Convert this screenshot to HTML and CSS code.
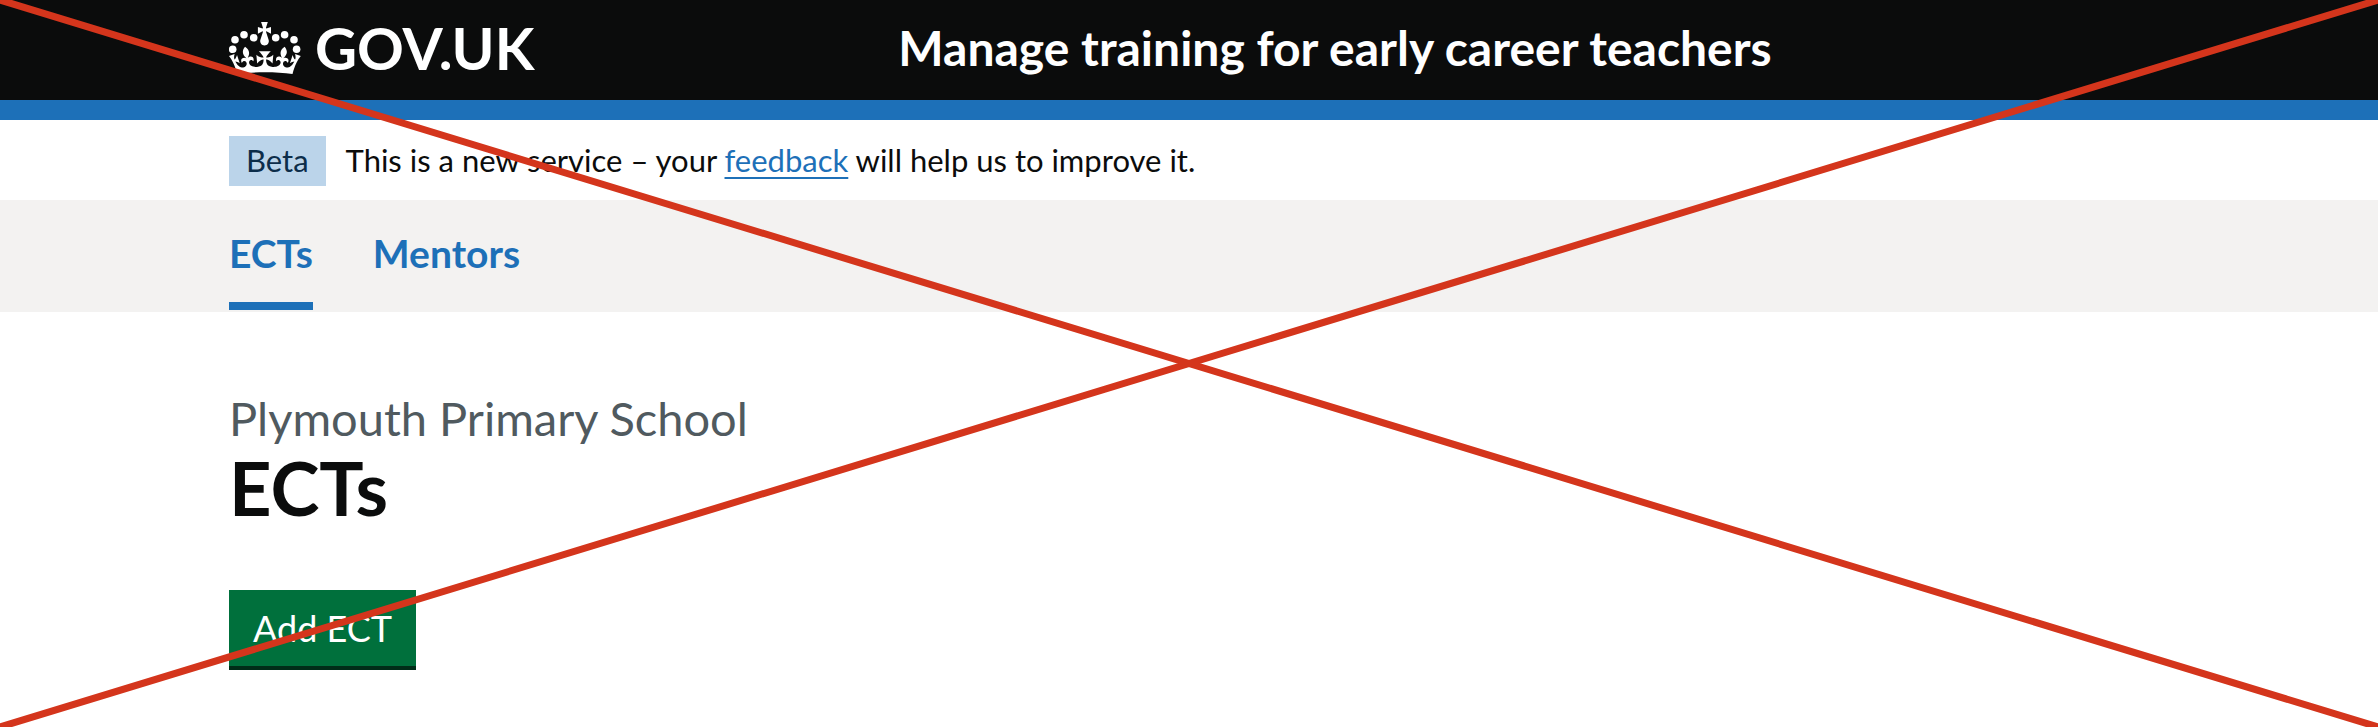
FILE: index.html
```html
<!DOCTYPE html>
<html lang="en">
<head>
<meta charset="utf-8">
<meta name="viewport" content="width=device-width, initial-scale=1">
<title>ECTs - Manage training for early career teachers</title>
<link rel="stylesheet" href="styles.css">
</head>
<body>
<header class="header">
  <div class="container header-inner">
    <a class="logo" href="#" aria-label="GOV.UK">
      <svg class="crown" viewBox="0 0 72 53" aria-hidden="true">
        <g fill="currentColor">
          <circle cx="3.7" cy="27.3" r="3.8"/>
          <circle cx="6" cy="17.7" r="3.8"/>
          <circle cx="15" cy="12.8" r="3.8"/>
          <circle cx="24.7" cy="15.8" r="3.8"/>
          <circle cx="46.7" cy="15.8" r="3.8"/>
          <circle cx="55.6" cy="12.8" r="3.8"/>
          <circle cx="65" cy="17.7" r="3.8"/>
          <circle cx="67.6" cy="27.3" r="3.8"/>
          <path transform="translate(3.8 0)" d="M33.1,9.8c.2-.1.3-.3.5-.5l4.6,2.4v-6.8l-4.6,1.5c-.1-.2-.3-.3-.5-.5l1.9-5.9h-6.7l1.9,5.9c-.2.1-.3.3-.5.5l-4.6-1.5v6.8l4.6-2.4c.1.2.3.3.5.5l-2.6,8c-.9,2.8,1.2,5.7,4.1,5.7c3,0,5.1-2.9,4.1-5.7l-2.6-8Z"/>
          <path transform="translate(-.1 -9.8) scale(1.13 1.03)" d="M37,37.9s-3.4,3.8-4.1,6.1c2.2,0,4.2-.5,6.4-2.8l-.7,8.5c-2-2.8-4.4-4.1-5.7-3.8.1,3.1.5,6.7,5.8,7.2,3.7.3,6.7-1.5,7-3.8.4-2.6-2-4.3-3.7-1.6-1.4-4.5,2.4-6.1,4.9-3.2-1.9-4.5-1.8-7.7,2.4-10.9,3,4,2.6,7.3-1.2,11.1,2.4-1.3,6.2,0,4,4.6-1.2-2.8-3.7-2.2-4.2.2-.3,1.7.7,3.7,3,4.2,1.9.3,4.7-.9,7-5.9-1.3,0-2.4.7-3.9,1.7l2.4-8c.6,2.3,1.4,3.7,2.2,4.5.6-1.6.5-2.8,0-5.3l5,1.8c-2.6,3.6-5.2,8.7-7.3,17.5-7.4-1.1-15.7-1.7-24.5-1.7h0c-8.8,0-17.1.6-24.5,1.7-2.1-8.9-4.7-13.9-7.3-17.5l5-1.8c-.5,2.5-.6,3.7,0,5.3.8-.8,1.6-2.3,2.2-4.5l2.4,8c-1.5-1-2.6-1.7-3.9-1.7,2.3,5,5.2,6.2,7,5.9,2.3-.4,3.3-2.4,3-4.2-.5-2.4-3-3.1-4.2-.2-2.2-4.6,1.6-6,4-4.6-3.7-3.7-4.2-7.1-1.2-11.1,4.2,3.2,4.3,6.4,2.4,10.9,2.5-2.8,6.3-1.3,4.9,3.2-1.8-2.7-4.1-1-3.7,1.6.3,2.3,3.3,4.1,7,3.8,5.4-.5,5.7-4.2,5.8-7.2-1.3-.2-3.7,1-5.7,3.8l-.7-8.5c2.2,2.3,4.2,2.7,6.4,2.8-.7-2.3-4.1-6.1-4.1-6.1h10.6Z"/>
        </g>
      </svg>
      <span>GOV.UK</span>
    </a>
    <a class="service-name" href="#">Manage training for early career teachers</a>
  </div>
</header>
<div class="container phase-banner">
  <strong class="tag">Beta</strong>
  <span>This is a new service – your <a class="link" href="#">feedback</a> will help us to improve it.</span>
</div>
<nav class="nav" aria-label="Primary">
  <ul class="container nav-list">
    <li><a class="nav-link nav-link-current" href="#" aria-current="page">ECTs</a></li>
    <li><a class="nav-link" href="#">Mentors</a></li>
  </ul>
</nav>
<main class="container main">
  <span class="caption">Plymouth Primary School</span>
  <h1 class="heading">ECTs</h1>
  <button class="button" type="button">Add ECT</button>
</main>
<svg class="cross" viewBox="0 0 100 100" preserveAspectRatio="none" aria-hidden="true">
  <path d="M0 0 100 100M0 100 100 0" vector-effect="non-scaling-stroke"/>
</svg>
</body>
</html>
```

FILE: styles.css
```css
* {
  box-sizing: border-box;
}

body {
  margin: 0;
  position: relative;
  min-height: 100vh;
  background: #fff;
  color: #0b0c0c;
  font-family: Lato, "Open Sans", sans-serif;
  font-size: 31px;
  line-height: 40px;
}

.container {
  width: calc(100% - 80px);
  max-width: 1920px;
  margin: 0 auto;
}

.header {
  background: #0b0c0c;
  border-bottom: 20px solid #1d70b8;
}

.header-inner {
  display: grid;
  grid-template-columns: 1fr 2fr;
  column-gap: 44px;
  align-items: center;
  padding: 18px 0 22px;
}

.logo {
  display: flex;
  align-items: center;
  gap: 14px;
  color: #fff;
  font-size: 58px;
  font-weight: 700;
  line-height: 60px;
  text-decoration: none;
}

.crown {
  width: 72px;
  height: 53px;
}

.service-name {
  color: #fff;
  font-size: 48px;
  font-weight: 700;
  line-height: 60px;
  text-decoration: none;
}

.phase-banner {
  display: flex;
  align-items: baseline;
  gap: 20px;
  padding: 16px 0 14px;
}

.tag {
  padding: 4px 17px 6px;
  background: #bbd4ea;
  color: #0c2d4a;
  font-weight: 400;
}

.link {
  color: #1d70b8;
  text-decoration: underline;
  text-decoration-thickness: 2px;
  text-decoration-skip-ink: none;
  text-underline-offset: 5px;
}

.nav {
  background: #f3f2f1;
}

.nav-list {
  display: flex;
  gap: 60px;
  padding: 0 0 2px;
  list-style: none;
}

.nav-link {
  display: block;
  padding: 28px 0 24px;
  border-bottom: 8px solid transparent;
  color: #1d70b8;
  font-size: 39px;
  font-weight: 700;
  line-height: 50px;
  text-decoration: none;
}

.nav-link-current {
  border-bottom-color: #1d70b8;
}

.main {
  padding: 78px 0 40px;
}

.caption {
  display: block;
  color: #505a5f;
  font-size: 47px;
  line-height: 56px;
}

.heading {
  margin: 2px 0 62px;
  font-size: 74px;
  font-weight: 700;
  line-height: 80px;
}

.button {
  display: block;
  padding: 14px 24px;
  border: 0;
  background: #00703c;
  box-shadow: 0 4px 0 #002d18;
  color: #fff;
  font: inherit;
  font-size: 36px;
  line-height: 48px;
}

.cross {
  position: absolute;
  inset: 0;
  width: 100%;
  height: 100%;
  fill: none;
  stroke: #d4351c;
  stroke-width: 7px;
  pointer-events: none;
}
```
